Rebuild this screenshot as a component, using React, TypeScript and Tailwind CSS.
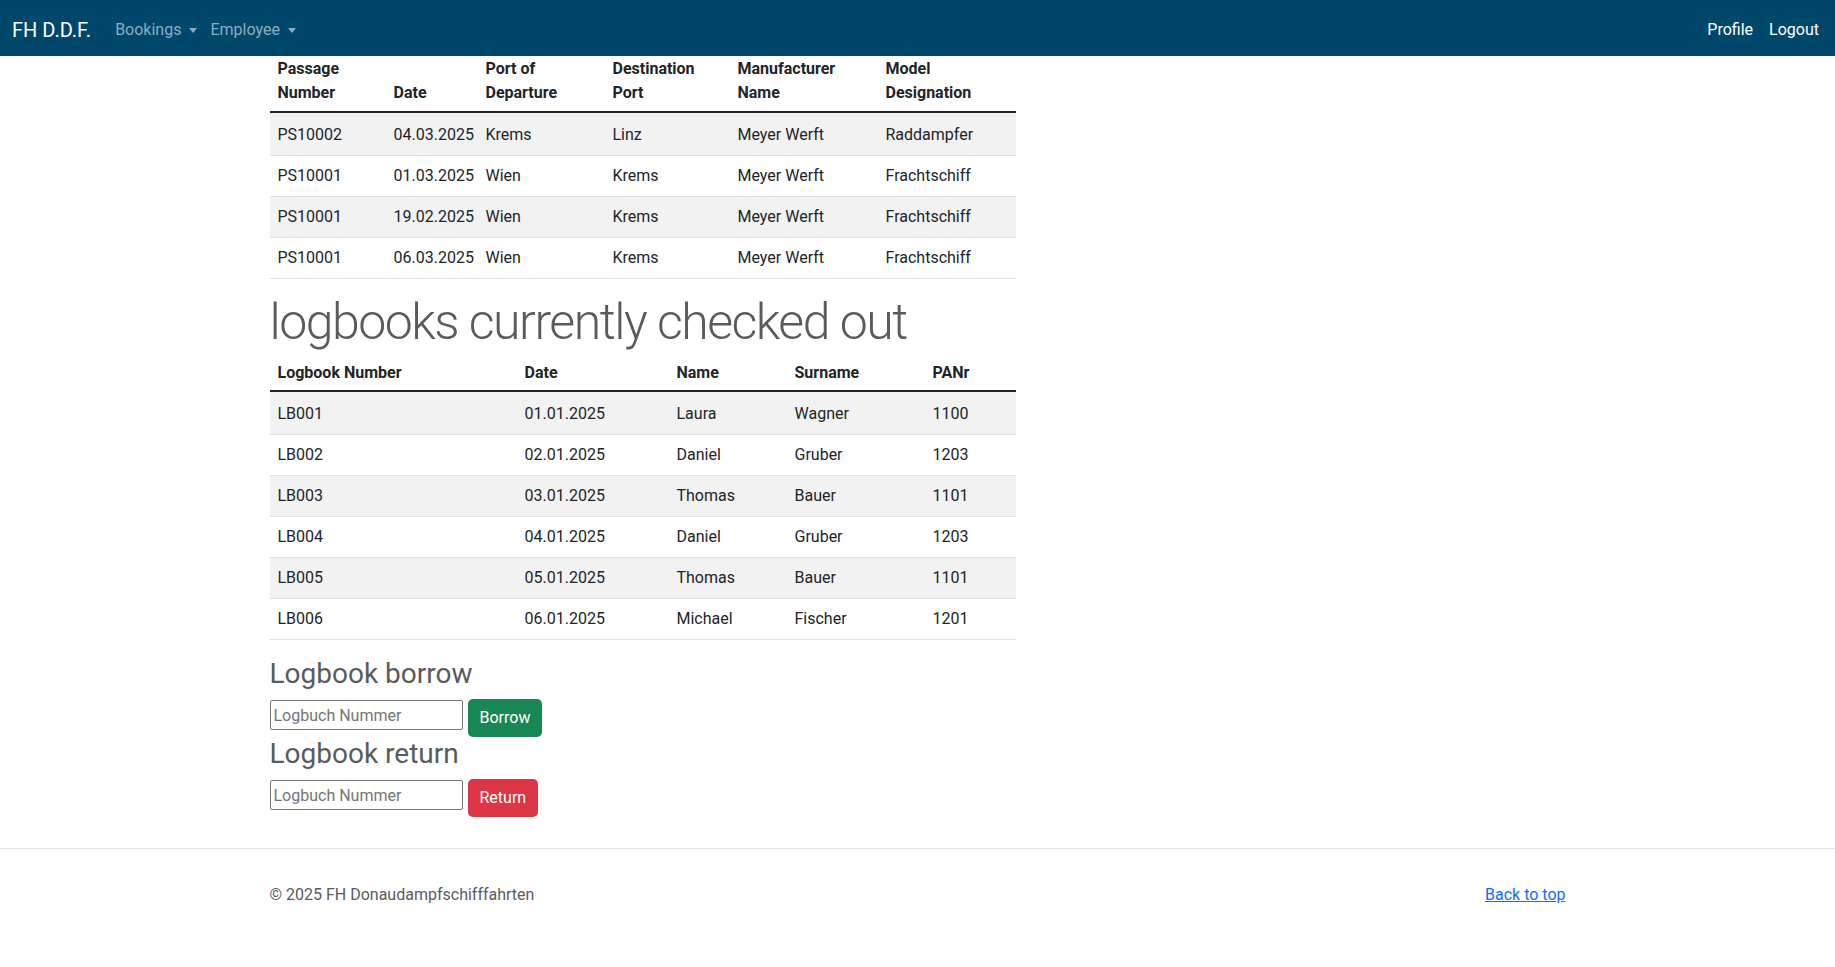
const passages = [
  ["PS10002", "04.03.2025", "Krems", "Linz", "Meyer Werft", "Raddampfer"],
  ["PS10001", "01.03.2025", "Wien", "Krems", "Meyer Werft", "Frachtschiff"],
  ["PS10001", "19.02.2025", "Wien", "Krems", "Meyer Werft", "Frachtschiff"],
  ["PS10001", "06.03.2025", "Wien", "Krems", "Meyer Werft", "Frachtschiff"],
];

const logbooks = [
  ["LB001", "01.01.2025", "Laura", "Wagner", "1100"],
  ["LB002", "02.01.2025", "Daniel", "Gruber", "1203"],
  ["LB003", "03.01.2025", "Thomas", "Bauer", "1101"],
  ["LB004", "04.01.2025", "Daniel", "Gruber", "1203"],
  ["LB005", "05.01.2025", "Thomas", "Bauer", "1101"],
  ["LB006", "06.01.2025", "Michael", "Fischer", "1201"],
];

const passageCols = ["w-[116px]", "w-[92px]", "w-[127px]", "w-[125px]", "w-[148px]", "w-[138px]"];
const logbookCols = ["w-[247px]", "w-[152px]", "w-[118px]", "w-[138px]", "w-[91px]"];

function Caret() {
  return (
    <span className="ml-2 inline-block h-0 w-0 border-x-[4.5px] border-t-[5px] border-x-transparent border-t-current" />
  );
}

function Rows({ rows }: { rows: string[][] }) {
  return (
    <tbody>
      {rows.map((r, i) => (
        <tr key={i} className={i % 2 === 0 ? "bg-[#f2f2f2]" : "bg-white"}>
          {r.map((c, j) => (
            <td key={j} className={`border-b border-[#dee2e6] px-2 pb-2 leading-6 ${i === 0 ? "pt-[10px]" : "pt-2"}`}>
              {c}
            </td>
          ))}
        </tr>
      ))}
    </tbody>
  );
}

function LendForm({ title, label, color }: { title: string; label: string; color: string }) {
  return (
    <div>
      <h3 className="mb-2 text-[28px] leading-[34px] text-[#595c5f]">{title}</h3>
      <div className="flex items-start gap-[5px]">
        <input
          placeholder="Logbuch Nummer"
          className="mt-[1px] h-[30px] w-[193px] rounded-[2px] border border-[#767676] px-[3px] text-base text-[#212529] placeholder:text-[#757575]"
        />
        <button className={`h-[38px] rounded-[5px] px-3 text-base text-white ${color}`}>{label}</button>
      </div>
    </div>
  );
}

export default function App() {
  return (
    <div className="min-h-screen bg-white font-['Roboto','Liberation_Sans',sans-serif] text-base text-[#212529]">
      <nav className="flex h-14 items-center justify-between bg-[#00486b] pl-3 pr-2 pt-1">
        <div className="flex items-center">
          <a className="mr-4 text-xl text-white">FH D.D.F.</a>
          <a className="flex items-center pl-2 pr-[5px] text-[#8cacbc]">
            Bookings <Caret />
          </a>
          <a className="flex items-center pl-2 pr-[5px] text-[#8cacbc]">
            Employee <Caret />
          </a>
        </div>
        <div className="flex items-center text-white">
          <a className="px-2">Profile</a>
          <a className="px-2">Logout</a>
        </div>
      </nav>

      <main className="mx-auto w-[1320px] px-3">
        <div className="w-[746px]">
          <table className="w-full table-fixed border-collapse">
            <thead>
              <tr className="border-b-2 border-[#212529]">
                {[
                  ["Passage", "Number"],
                  ["", "Date"],
                  ["Port of", "Departure"],
                  ["Destination", "Port"],
                  ["Manufacturer", "Name"],
                  ["Model", "Designation"],
                ].map(([a, b], i) => (
                  <th key={i} className={`${passageCols[i]} px-2 pb-[6px] pt-[1px] text-left align-bottom font-bold leading-6`}>
                    {a && <div>{a}</div>}
                    <div>{b}</div>
                  </th>
                ))}
              </tr>
            </thead>
            <Rows rows={passages} />
          </table>

          <h1 className="mt-[7px] whitespace-nowrap pt-[6px] text-[50px] font-light leading-[61px] tracking-[-1.5px] text-[#595c5f]">
            logbooks currently checked out
          </h1>

          <table className="w-full table-fixed border-collapse">
            <thead>
              <tr className="border-b-2 border-[#212529]">
                {["Logbook Number", "Date", "Name", "Surname", "PANr"].map((h, i) => (
                  <th key={h} className={`${logbookCols[i]} px-2 pb-[5px] pt-2 text-left font-bold leading-6`}>
                    {h}
                  </th>
                ))}
              </tr>
            </thead>
            <Rows rows={logbooks} />
          </table>

          <div className="mt-[17px]">
            <LendForm title="Logbook borrow" label="Borrow" color="bg-[#198754]" />
            <LendForm title="Logbook return" label="Return" color="bg-[#dc3545]" />
          </div>
        </div>
      </main>

      <footer className="mt-[31px] border-t border-[#dee2e6]">
        <div className="mx-auto flex w-[1320px] items-center justify-between px-3 pb-10 pt-[34px] leading-6">
          <p className="text-[#595c5f]">© 2025 FH Donaudampfschifffahrten</p>
          <a className="text-[#0d6efd] underline">Back to top</a>
        </div>
      </footer>
    </div>
  );
}
